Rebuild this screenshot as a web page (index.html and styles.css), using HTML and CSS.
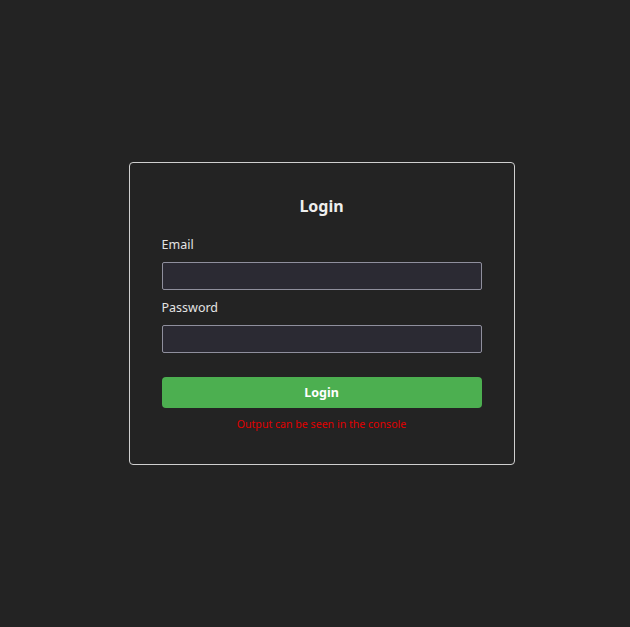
FILE: index.html
```html
<!DOCTYPE html>
<html>
<head>
<meta charset="utf-8">
<link rel="stylesheet" href="styles.css">
</head>
<body>
<main class="page">
  <form class="card">
    <h2 class="title">Login</h2>
    <label class="label" for="email">Email</label>
    <input class="input" id="email" type="email">
    <label class="label" for="password">Password</label>
    <input class="input" id="password" type="password">
    <button class="btn" type="button">Login</button>
    <p class="note">Output can be seen in the console</p>
  </form>
</main>
</body>
</html>
```
FILE: styles.css
```css
html, body {
  margin: 0;
  height: 100%;
  background: #232323;
}
body {
  font-family: "Noto Sans", "Open Sans", sans-serif;
  color: #e6e6e6;
}
.page {
  height: 100%;
  display: flex;
  align-items: center;
  justify-content: center;
  padding-left: 13px;
  box-sizing: border-box;
}
.card {
  width: 320px;
  padding: 32px;
  border: 1px solid #cfcfcf;
  border-radius: 4px;
  display: flex;
  flex-direction: column;
}
.title {
  margin: 0 0 18px;
  font-size: 16px;
  line-height: 23px;
  font-weight: 700;
  text-align: center;
  color: #eeeeee;
}
.label {
  font-size: 12.5px;
  line-height: 18px;
  color: #e4e4e4;
  margin-bottom: 8px;
}
.input {
  height: 28px;
  box-sizing: border-box;
  margin: 0 0 9px;
  border: 1px solid #8f8f9d;
  border-radius: 2px;
  background: #2b2a33;
  color: #fff;
}
.btn {
  margin-top: 15px;
  height: 31px;
  border: none;
  border-radius: 4px;
  background: #4caf50;
  color: #ffffff;
  font-family: inherit;
  font-weight: 700;
  font-size: 12.5px;
}
.note {
  margin: 9px 0 0;
  font-size: 10.6px;
  line-height: 15px;
  text-align: center;
  color: #e00000;
}
```
